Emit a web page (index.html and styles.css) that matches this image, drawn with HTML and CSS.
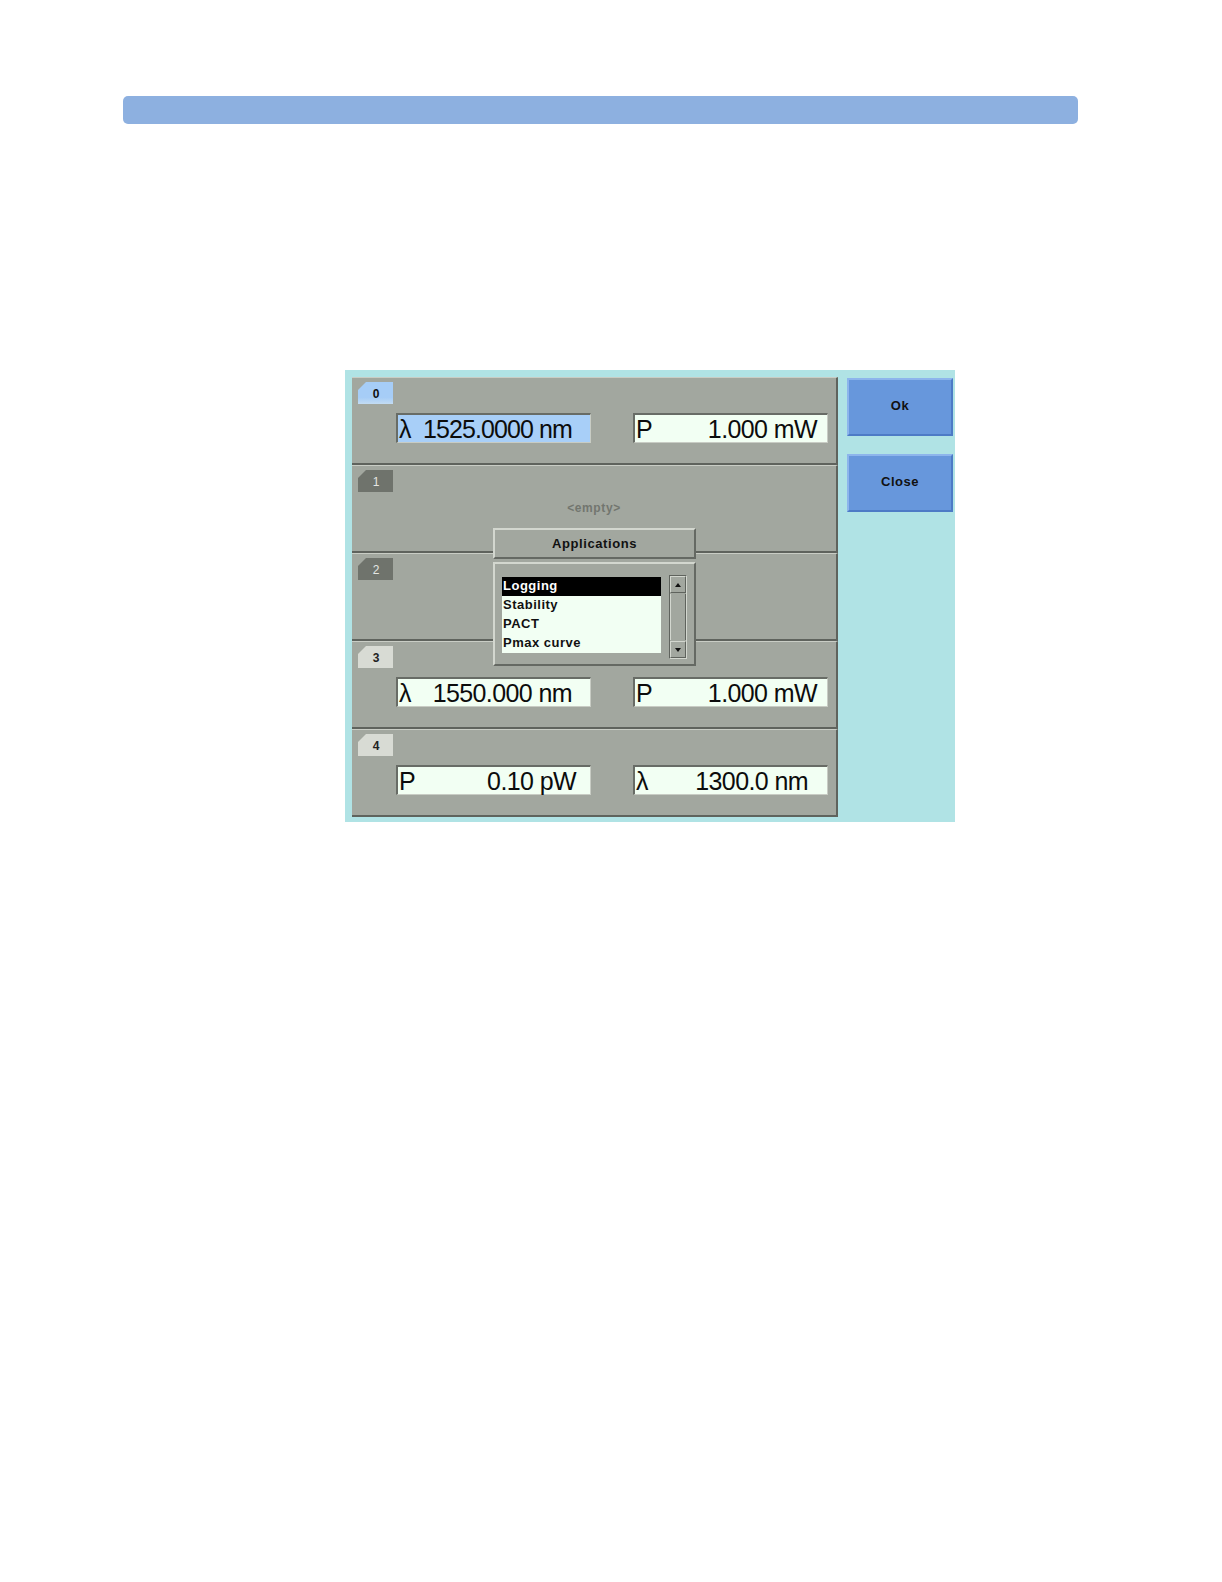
FILE: index.html
```html
<!DOCTYPE html>
<html>
<head>
<meta charset="utf-8">
<link rel="stylesheet" href="styles.css">
</head>
<body>
<div class="topbar"></div>
<div class="device">
  <div class="panel">
    <div class="row">
      <div class="tab tab-blue">0</div>
      <div class="fields">
        <div class="field field-blue"><span class="lbl">λ</span><span class="val val-tight">1525.0000 nm</span></div>
        <div class="field"><span class="lbl">P</span><span class="val pr11">1.000 mW</span></div>
      </div>
    </div>
    <div class="row">
      <div class="tab tab-dark">1</div>
      <div class="empty">&lt;empty&gt;</div>
    </div>
    <div class="row">
      <div class="tab tab-dark">2</div>
    </div>
    <div class="row">
      <div class="tab tab-light">3</div>
      <div class="fields">
        <div class="field"><span class="lbl">λ</span><span class="val pr19">1550.000 nm</span></div>
        <div class="field"><span class="lbl">P</span><span class="val pr11">1.000 mW</span></div>
      </div>
    </div>
    <div class="row">
      <div class="tab tab-light">4</div>
      <div class="fields">
        <div class="field"><span class="lbl">P</span><span class="val pr15">0.10 pW</span></div>
        <div class="field"><span class="lbl">λ</span><span class="val pr20">1300.0 nm</span></div>
      </div>
    </div>

    <div class="popup">
      <div class="popup-head">Applications</div>
      <div class="popup-body">
        <ul class="list">
          <li class="sel">Logging</li>
          <li>Stability</li>
          <li>PACT</li>
          <li>Pmax curve</li>
        </ul>
        <div class="scroll">
          <div class="sbtn"><span class="arrow-up"></span></div>
          <div class="strack"></div>
          <div class="sbtn"><span class="arrow-down"></span></div>
        </div>
      </div>
    </div>
  </div>
  <div class="buttons">
    <div class="btn">Ok</div>
    <div class="btn">Close</div>
  </div>
</div>
</body>
</html>
```
FILE: styles.css
```css
html, body {
  margin: 0;
  padding: 0;
  background: #ffffff;
}
body {
  font-family: "Liberation Sans", Arial, sans-serif;
}
.topbar {
  margin: 96px 0 0 123px;
  width: 955px;
  height: 28px;
  border-radius: 5px;
  background: #8db0e0;
}
.device {
  margin: 246px 0 0 345px;
  width: 610px;
  height: 452px;
  box-sizing: border-box;
  padding: 7px 0 0 7px;
  background: #b0e3e5;
  display: flex;
  gap: 9px;
}
.panel {
  position: relative;
  width: 486px;
  height: 440px;
}
.row {
  height: 88px;
  box-sizing: border-box;
  background: #a2a79f;
  border-top: 1px solid #c9cdc5;
  border-bottom: 2px solid #5f635d;
  border-right: 2px solid #5f635d;
  padding: 4px 0 0 6px;
}
.tab {
  width: 35px;
  height: 22px;
  clip-path: polygon(8px 0, 100% 0, 100% 100%, 0 100%, 0 8px);
  font-size: 12px;
  font-weight: bold;
  text-align: center;
  line-height: 25px;
  box-sizing: border-box;
  padding-left: 1px;
}
.tab-blue {
  background: linear-gradient(#a6cdf7 70%, #c3dcf3);
  color: #101010;
}
.tab-dark {
  background: #6f736c;
  color: #e4e6e2;
  font-weight: normal;
}
.tab-light {
  background: #d8dbd4;
  color: #222;
}
.fields {
  display: flex;
  gap: 42px;
  margin: 9px 0 0 38px;
}
.field {
  width: 195px;
  height: 30px;
  box-sizing: border-box;
  background: #f2fff3;
  border-top: 2px solid #686c66;
  border-left: 2px solid #686c66;
  border-right: 1px solid #c8ccc4;
  border-bottom: 1px solid #c8ccc4;
  display: flex;
  justify-content: space-between;
  align-items: center;
  font-size: 25px;
  letter-spacing: -0.6px;
  color: #0c0c0c;
  line-height: 26px;
}
.field-blue {
  background: #a8cff8;
}
.lbl {
  padding-left: 1px;
}
.val-tight {
  padding-right: 18px;
  letter-spacing: -0.9px;
}
.pr11 { padding-right: 10px; }
.pr15 { padding-right: 14px; }
.pr19 { padding-right: 18px; }
.pr20 { padding-right: 19px; }
.empty {
  text-align: center;
  margin-top: 9px;
  padding-right: 6px;
  font-size: 12px;
  font-weight: bold;
  color: #72766f;
  letter-spacing: 0.6px;
}
.popup {
  position: absolute;
  left: 141px;
  top: 151px;
  width: 203px;
}
.popup-head {
  height: 31px;
  box-sizing: border-box;
  background: #a2a79f;
  border-top: 2px solid #d3d7cf;
  border-left: 2px solid #d3d7cf;
  border-right: 2px solid #656963;
  border-bottom: 2px solid #656963;
  text-align: center;
  font-size: 13px;
  font-weight: bold;
  letter-spacing: 0.6px;
  line-height: 28px;
  color: #111;
}
.popup-body {
  margin-top: 3px;
  height: 104px;
  box-sizing: border-box;
  background: #a2a79f;
  border-top: 2px solid #d3d7cf;
  border-left: 2px solid #d3d7cf;
  border-right: 2px solid #656963;
  border-bottom: 2px solid #656963;
  display: flex;
  align-items: flex-start;
  padding: 11px 0 0 7px;
}
.list {
  list-style: none;
  margin: 2px 0 0 0;
  padding: 0;
  width: 159px;
  background: #f2fff3;
}
.list li {
  height: 19px;
  line-height: 18px;
  font-size: 13px;
  font-weight: bold;
  letter-spacing: 0.5px;
  color: #111;
  padding-left: 1px;
}
.list li.sel {
  background: #000;
  color: #fff;
}
.scroll {
  margin-left: 8px;
  width: 18px;
  height: 84px;
  box-sizing: border-box;
  border: 1px solid #5f635d;
  border-right-color: #d3d7cf;
  border-bottom-color: #d3d7cf;
  display: flex;
  flex-direction: column;
}
.sbtn {
  height: 17px;
  box-sizing: border-box;
  border-top: 1px solid #d3d7cf;
  border-left: 1px solid #d3d7cf;
  border-right: 1px solid #5f635d;
  border-bottom: 1px solid #5f635d;
  display: flex;
  align-items: center;
  justify-content: center;
}
.strack {
  flex: 1;
  border-left: 1px solid #d3d7cf;
  border-right: 1px solid #5f635d;
  margin: 1px 0;
}
.arrow-up {
  width: 0;
  height: 0;
  border-left: 3px solid transparent;
  border-right: 3px solid transparent;
  border-bottom: 4px solid #111;
}
.arrow-down {
  width: 0;
  height: 0;
  border-left: 3px solid transparent;
  border-right: 3px solid transparent;
  border-top: 4px solid #111;
}
.buttons {
  display: flex;
  flex-direction: column;
  gap: 18px;
  padding-top: 1px;
}
.btn {
  width: 106px;
  height: 58px;
  box-sizing: border-box;
  background: #6797dc;
  border-top: 2px solid #8db5ec;
  border-left: 2px solid #8db5ec;
  border-right: 2px solid #4d7bc6;
  border-bottom: 2px solid #4d7bc6;
  text-align: center;
  line-height: 52px;
  font-size: 13px;
  font-weight: bold;
  letter-spacing: 0.5px;
  color: #111;
}
```
